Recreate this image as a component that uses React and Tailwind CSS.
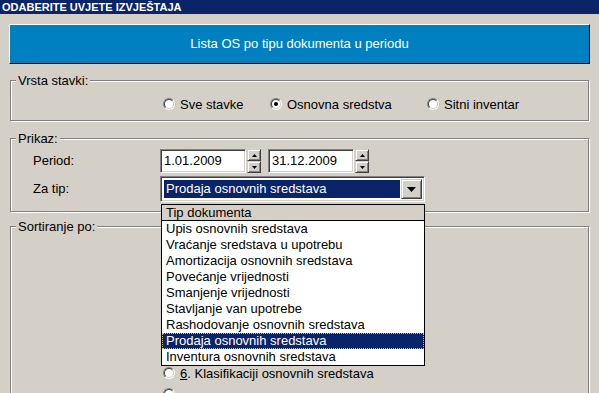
import React from "react";

function Radio({ checked }) {
  return (
    <div className="w-[12px] h-[12px] shrink-0 rounded-full border border-t-[#808080] border-l-[#808080] border-r-white border-b-white flex">
      <div className="flex-1 rounded-full border border-t-[#404040] border-l-[#404040] border-r-[#d4d0c8] border-b-[#d4d0c8] bg-white flex items-center justify-center">
        {checked && <div className="w-[4px] h-[4px] rounded-full bg-black" />}
      </div>
    </div>
  );
}

function RadioItem({ checked, children, className = "" }) {
  return (
    <div className={"flex items-center " + className}>
      <Radio checked={checked} />
      <span className="ml-[5px] leading-[15px]">{children}</span>
    </div>
  );
}

function SpinHalf({ up }) {
  return (
    <div className="h-[12px] bg-[#d4d0c8] border border-t-[#d4d0c8] border-l-[#d4d0c8] border-b-[#404040] border-r-[#404040] shadow-[inset_1px_1px_0_white,inset_-1px_-1px_0_#808080] flex items-center justify-center">
      <svg width="5" height="3" viewBox="0 0 5 3">
        {up ? <path d="M2.5 0 L5 3 L0 3 Z" fill="black" /> : <path d="M0 0 L5 0 L2.5 3 Z" fill="black" />}
      </svg>
    </div>
  );
}

function DateBox({ value }) {
  return (
    <div className="flex">
      <div className="w-[86px] h-[24px] bg-white border border-t-[#808080] border-l-[#808080] border-b-white border-r-white shadow-[inset_1px_1px_0_#404040,inset_-1px_-1px_0_#d4d0c8] pl-[3px] flex items-center">
        {value}
      </div>
      <div className="ml-[1px] w-[14px] flex flex-col">
        <SpinHalf up />
        <SpinHalf />
      </div>
    </div>
  );
}

function Group({ label, className = "", children }) {
  return (
    <fieldset className={"mx-[1px] border border-[#808080] shadow-[inset_1px_1px_0_white,1px_1px_0_white] " + className}>
      <legend className="ml-[5px] px-[2px] leading-[15px] bg-[#d4d0c8]">{label}</legend>
      {children}
    </fieldset>
  );
}

const items = [
  "Upis osnovnih sredstava",
  "Vraćanje sredstava u upotrebu",
  "Amortizacija osnovnih sredstava",
  "Povećanje vrijednosti",
  "Smanjenje vrijednosti",
  "Stavljanje van upotrebe",
  "Rashodovanje osnovnih sredstava",
  "Prodaja osnovnih sredstava",
  "Inventura osnovnih sredstava",
];

export default function App() {
  return (
    <div className="relative w-[599px] h-[393px] overflow-hidden bg-[#d4d0c8] text-black text-[13px] font-['Liberation_Sans',Arial,sans-serif]">
      <div className="h-[14px] bg-[#0a246a] text-white font-bold text-[11px] leading-[14px] pl-[2px]">
        ODABERITE UVJETE IZVJEŠTAJA
      </div>
      <div className="px-[9px] pt-[10px]">
        <div className="h-[40px] bg-[#0080c0] border border-t-white border-l-white border-b-black border-r-black flex items-center justify-center text-white">
          Lista OS po tipu dokumenta u periodu
        </div>

        <Group label="Vrsta stavki:" className="mt-[9px]">
          <div className="h-[32px] flex items-center pl-[152px]">
            <RadioItem className="w-[107px]">Sve stavke</RadioItem>
            <RadioItem checked className="w-[157px]">Osnovna sredstva</RadioItem>
            <RadioItem>Sitni inventar</RadioItem>
          </div>
        </Group>

        <Group label="Prikaz:" className="mt-[10px]">
          <div className="pt-[3px] pb-[9px]">
            <div className="flex items-center h-[24px]">
              <div className="ml-[22px] w-[127px]">Period:</div>
              <DateBox value="1.01.2009" />
              <div className="ml-[7px]">
                <DateBox value="31.12.2009" />
              </div>
            </div>
            <div className="flex items-center h-[26px] mt-[3px]">
              <div className="ml-[22px] w-[127px]">Za tip:</div>
              <div className="w-[265px] h-[26px] bg-white border border-t-[#808080] border-l-[#808080] border-b-white border-r-white shadow-[inset_1px_1px_0_#404040,inset_-1px_-1px_0_#d4d0c8] p-[2px] flex">
                <div className="flex-1 ml-px mt-px mb-px bg-[#0a246a] text-white pl-[2px] flex items-center">
                  Prodaja osnovnih sredstava
                </div>
                <div className="w-[21px] ml-px bg-[#d4d0c8] border border-t-[#d4d0c8] border-l-[#d4d0c8] border-b-[#404040] border-r-[#404040] shadow-[inset_1px_1px_0_white,inset_-1px_-1px_0_#808080] flex items-center justify-center">
                  <svg width="9" height="5" viewBox="0 0 9 5">
                    <path d="M0 0 L9 0 L4.5 5 Z" fill="black" />
                  </svg>
                </div>
              </div>
            </div>
          </div>
        </Group>

        <Group label="Sortiranje po:" className="mt-[7px] h-[200px]">
          <div className="pt-[131px] pl-[152px]">
            <RadioItem className="h-[16px]">
              <span className="underline">6</span>. Klasifikaciji osnovnih sredstava
            </RadioItem>
            <div className="mt-[7px]">
              <Radio />
            </div>
          </div>
        </Group>
      </div>

      <div className="absolute left-[161px] top-[204px] w-[264px] bg-white border border-black leading-[16px]">
        <div className="h-[16px] bg-[#d4d0c8] border-b border-black pl-[4px] leading-[16px]">Tip dokumenta</div>
        {items.map((t, i) =>
          i === 7 ? (
            <div key={t} className="h-[16px] bg-[#0a246a] text-white pl-[4px] outline-1 outline-dotted outline-[#d8c060] -outline-offset-1">
              {t}
            </div>
          ) : (
            <div key={t} className="h-[16px] pl-[4px]">
              {t}
            </div>
          )
        )}
      </div>
    </div>
  );
}
